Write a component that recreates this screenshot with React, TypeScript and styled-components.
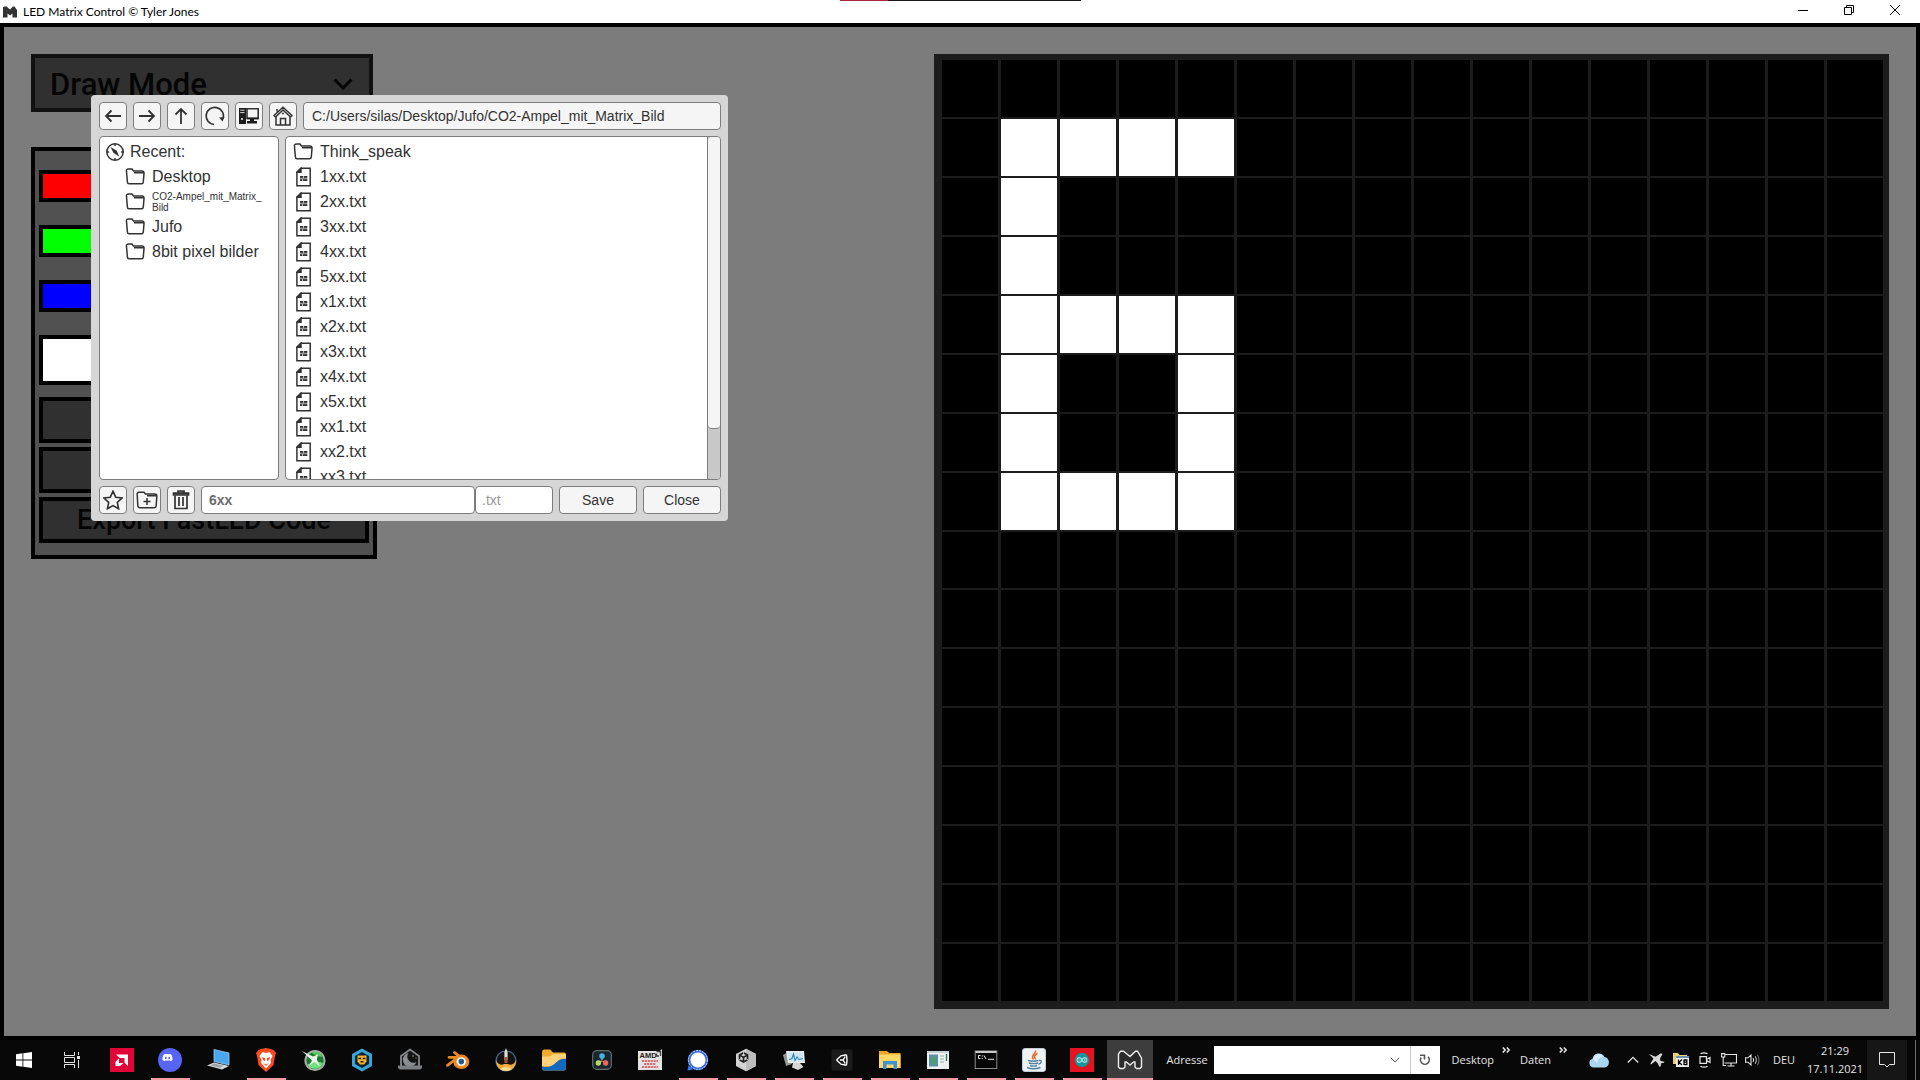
import React, { ReactNode, useState } from "react";
import styled, { createGlobalStyle } from "styled-components";
import { FaDiscord } from "react-icons/fa";
import { SiArduino, SiUnity } from "react-icons/si";

const GlobalStyle = createGlobalStyle`
  *, *::before, *::after { box-sizing: border-box; }
  body { margin: 0; background: #000; font-family: "Open Sans", sans-serif; overflow: hidden; }
  button, input, select { font: inherit; color: inherit; margin: 0; padding: 0; border-radius: 0; }
  svg { display: block; flex: none; }
`;

const Desktop = styled.div`
  position: relative;
  display: flex;
  flex-direction: column;
  height: 100vh;
`;

/* ---------- window chrome ---------- */

const TitleBar = styled.header`
  display: flex;
  align-items: flex-start;
  height: 23px;
  background: #fff;
  color: #000;
  font-size: 12px;
  line-height: 23px;
`;

const AppTitle = styled.h1`
  display: flex;
  align-items: center;
  gap: 6px;
  flex: 1;
  margin: 0;
  padding-left: 2px;
  font-family: Lato, sans-serif;
  font-size: 12px;
  font-weight: 400;
`;

const WindowButtons = styled.div`
  display: flex;
  padding-right: 2px;
`;

const WindowButton = styled.button`
  display: grid;
  place-items: center;
  width: 46px;
  height: 20px;
  border: 0;
  background: none;
`;

const EdgeStrip = styled.div`
  position: absolute;
  top: 0;
  left: 840px;
  display: flex;
  width: 241px;
  height: 1px;
  background: #1c1a1c;
`;

const EdgeStripAccent = styled.div`
  width: 48px;
  background: #a82a3a;
`;

const Stage = styled.main`
  position: relative;
  flex: 1;
  min-height: 0;
  display: flex;
  justify-content: space-between;
  padding: 27px;
  border: 4px solid #000;
  background: #7c7c7c;
`;

/* ---------- tool column ---------- */

const Tools = styled.section`
  display: flex;
  flex-direction: column;
  align-items: flex-start;
  gap: 35px;
  font-family: Roboto, sans-serif;
  font-weight: 500;
  color: #050505;
`;

const ModePicker = styled.div`
  position: relative;
  width: 342px;
  svg { position: absolute; right: 20px; top: 24px; pointer-events: none; }
`;

const ModeSelect = styled.select`
  appearance: none;
  width: 100%;
  height: 58px;
  padding: 3px 0 0 15px;
  border: 4px solid #111;
  background: #303030;
  font-size: 31px;
  line-height: 40px;
  opacity: 1;
`;

const ToolPanel = styled.div`
  display: flex;
  flex-direction: column;
  width: 346px;
  height: 412px;
  padding: 19px 4px 12px;
  border: 4px solid #000;
  background: #515151;
`;

const Channels = styled.div`
  display: flex;
  flex-direction: column;
  gap: 23px;
`;

const Swatch = styled.div<{ $color: string; $tall?: boolean }>`
  height: ${(p) => (p.$tall ? 50 : 32)}px;
  border: 4px solid #000;
  background: ${(p) => p.$color};
`;

const Actions = styled.div`
  display: flex;
  flex-direction: column;
  gap: 4px;
  margin-top: auto;
`;

const ActionButton = styled.button`
  height: 46px;
  border: 4px solid #000;
  background: #303030;
  font-size: 27px;
  line-height: 32px;
`;

/* ---------- LED matrix ---------- */

const Matrix = styled.section`
  display: grid;
  grid-template-columns: repeat(16, 1fr);
  grid-template-rows: repeat(16, 1fr);
  column-gap: 3px;
  row-gap: 2px;
  aspect-ratio: 1;
  padding: 6px 6px 8px 8px;
  background: #1c1c1c;
`;

const Led = styled.button<{ $on: boolean }>`
  min-width: 0;
  min-height: 0;
  border: 0;
  background: ${(p) => (p.$on ? "#fff" : "#000")};
`;

/* ---------- file dialog ---------- */

const Dialog = styled.div`
  position: absolute;
  left: 91px;
  top: 95px;
  display: flex;
  flex-direction: column;
  gap: 6px;
  width: 637px;
  padding: 7px 7px 7px 8px;
  border-radius: 4px;
  background: #d6d6d6;
  color: #323232;
  font-family: "Liberation Sans", Arial, sans-serif;
`;

const Bar = styled.div`
  display: flex;
  gap: 6px;
`;

const boxed = `
  height: 28px;
  border: 1px solid #7d7d7d;
  border-radius: 4px;
  background: #f5f5f5;
  font-size: 14px;
  line-height: 16px;
`;

const SquareButton = styled.button`
  ${boxed}
  display: grid;
  place-items: center;
  width: 28px;
`;

const TextButton = styled.button`
  ${boxed}
  width: 78px;
`;

const PathField = styled.input`
  ${boxed}
  flex: 1;
  min-width: 0;
  padding: 0 8px;
`;

const NameGroup = styled.div`
  display: flex;
  flex: 1;
  min-width: 0;
`;

const NameField = styled.input`
  ${boxed}
  flex: 1;
  min-width: 0;
  padding: 0 7px;
  background: #fff;
  color: #6c6c6c;
  font-weight: 700;
`;

const TypeField = styled.input`
  ${boxed}
  width: 78px;
  padding: 0 6px;
  background: #fff;
  &::placeholder { color: #989898; opacity: 1; }
`;

const Panes = styled.div`
  display: flex;
  gap: 6px;
  height: 344px;
`;

const Pane = styled.div<{ $grow?: boolean }>`
  display: flex;
  ${(p) => (p.$grow ? "flex: 1; min-width: 0;" : "width: 180px;")}
  border: 1px solid #7d7d7d;
  border-radius: 4px;
  background: #fff;
  overflow: hidden;
`;

const List = styled.ul<{ $inset: number }>`
  flex: 1;
  margin: 0;
  padding: 2px 0 0 ${(p) => p.$inset}px;
  list-style: none;
  font-size: 16px;
  line-height: 24px;
`;

const Entry = styled.li<{ $nested?: boolean; $heading?: boolean }>`
  display: flex;
  align-items: center;
  gap: ${(p) => (p.$heading ? 6 : 7)}px;
  height: 25px;
  padding-left: ${(p) => (p.$nested ? 19 : 0)}px;
`;

const IconSlot = styled.span`
  display: grid;
  place-items: center end;
  width: 20px;
`;

const SmallLabel = styled.span`
  width: 114px;
  font-size: 10px;
  line-height: 11px;
  word-break: break-all;
`;

const ScrollTrack = styled.div`
  width: 13px;
  border: 1px solid #7d7d7d;
  border-width: 0 0 0 1px;
  background: #c8c8c8;
`;

const ScrollThumb = styled.div`
  height: 292px;
  border-bottom: 1px solid #7d7d7d;
  border-radius: 4px;
  background: #f5f5f5;
`;

/* ---------- taskbar ---------- */

const Taskbar = styled.footer`
  display: flex;
  align-items: stretch;
  height: 40px;
  background: #080808;
  color: #e4e4e4;
  font-size: 11px;
  line-height: 18px;
`;

const SystemButtons = styled.div`
  display: flex;
  padding-right: 2px;
`;

const AppButtons = styled.nav`
  display: flex;
  flex: 1;
`;

const AppButton = styled.button<{ $running?: boolean; $active?: boolean }>`
  position: relative;
  display: grid;
  place-items: center;
  flex: none;
  width: 48px;
  border: 0;
  background: ${(p) =>
    p.$active ? "linear-gradient(#3d3d3d, #3d3d3d) 1px 0 / 46px 100% no-repeat" : "none"};
  &::after {
    content: "";
    position: absolute;
    bottom: 0;
    left: ${(p) => (p.$active ? 1 : 5)}px;
    right: ${(p) => (p.$active ? 1 : 4)}px;
    height: ${(p) => (p.$running || p.$active ? 2 : 0)}px;
    background: #f79ba4;
  }
`;

const AddressLabel = styled.label`
  display: flex;
  align-items: center;
  gap: 6px;
`;

const AddressBox = styled.div`
  display: flex;
  height: 28px;
  background: #fff;
  color: #555;
`;

const AddressInput = styled.input`
  width: 166px;
  border: 0;
  background: none;
`;

const AddressButton = styled.button<{ $divided?: boolean }>`
  display: grid;
  place-items: center;
  width: 30px;
  border: 0;
  border-left: ${(p) => (p.$divided ? "1px solid #c8c8c8" : "0")};
  background: none;
`;

const Toolbars = styled.div`
  display: flex;
  padding-left: 12px;
`;

const ToolbarLink = styled.button`
  display: flex;
  align-items: center;
  gap: 8px;
  margin-right: 10px;
  border: 0;
  background: none;
  svg { align-self: flex-start; margin-top: 7px; }
`;

const Tray = styled.div`
  display: flex;
  align-items: center;
`;

const TrayButton = styled.button<{ $wide?: boolean }>`
  display: grid;
  place-items: center;
  width: ${(p) => (p.$wide ? 44 : 24)}px;
  height: 100%;
  border: 0;
  background: none;
`;

const Language = styled.button`
  width: 38px;
  border: 0;
  background: none;
`;

const Clock = styled.time`
  width: 64px;
  text-align: center;
`;

const Notifications = styled.button`
  display: grid;
  place-items: center;
  width: 40px;
  height: 100%;
  border: 0;
  background: #161616;
`;

const ShowDesktop = styled.button`
  width: 5px;
  margin-left: 8px;
  border: 0;
  border-left: 1px solid #6a6a6a;
  background: none;
`;

/* ---------- icons ---------- */

type IconProps = { w?: number; h?: number; box?: string; sw?: number; children: ReactNode };

const Line = ({ w = 20, h = 20, box, sw = 1, children }: IconProps) => (
  <svg width={w} height={h} viewBox={box ?? `0 0 ${w} ${h}`} fill="none" stroke="currentColor" strokeWidth={sw} aria-hidden="true">
    {children}
  </svg>
);

const FolderIcon = () => (
  <Line w={20} h={17} sw={1.5}>
    <path d="M1.5 3.5 Q1 1 3.5 1 H7 L8.5 3 H17 Q19.3 3 19 5.5 L18.3 14 Q18.2 15.8 16.5 15.8 H4 Q2.5 15.8 2.4 14 Z M9 4.8 H18.5" />
  </Line>
);

const FileIcon = () => (
  <Line w={17} h={20} sw={1.5}>
    <path d="M5 1.2 H14.2 V18.8 H.9 V5.2 Z" />
    <path d="M.9 5.2 L5 1.2 V5.2 Z" fill="currentColor" />
    <path d="M4 10 H7 M7.7 10 H11.3 M4 13 H6.2 M6.9 13 H11.3" strokeWidth={1.8} />
    <path d="M4 11.5 H11.3" stroke="#999" />
  </Line>
);

const CompassIcon = () => (
  <Line w={18} h={18} sw={1.5} box="1 1 18 18">
    <circle cx="10" cy="10" r="8.2" />
    <path d="M10 2 V4 M10 16 V18 M2 10 H4 M16 10 H18" />
    <path d="M5.5 5 L11.8 8.8 L14 14.5 L8.4 10.8 Z" fill="currentColor" stroke="none" />
  </Line>
);

const TitleLogo = () => (
  <svg width="15" height="12" viewBox="0 0 15 12" fill="#333" aria-hidden="true">
    <path d="M1 1.5 L2 .5 H4.5 L8 3.5 L11 .5 H12.5 L15 4 V11.5 H10.5 V7.5 L8 9.5 L5.5 7.5 V11.5 H.5 L1 10 Z" />
  </svg>
);

const MLogo = () => (
  <svg width="26" height="20" viewBox="0 0 26 20" fill="#2b2b2b" stroke="#f0f0f0" strokeWidth={1.4} strokeLinejoin="round" aria-hidden="true">
    <path d="M1.5 4 L3.5 1.2 H6.5 L13 6.5 L18.5 1.2 H20.5 L24.5 8 V17 L23 18.5 H19.5 L18 17 V12 H16.5 L13 15 L9.5 12 H8 V17 L6.5 18.5 H3 L1.5 17 Z" />
  </svg>
);

const AppIcon = ({ children, size = 24 }: { children: ReactNode; size?: number }) => (
  <svg width={size} height={size} viewBox="0 0 24 24" aria-hidden="true">{children}</svg>
);

const apps: { name: string; running?: boolean; active?: boolean; icon: ReactNode }[] = [
  {
    name: "AMD Radeon Software",
    icon: (
      <AppIcon>
        <rect width="24" height="24" fill="#e0063a" />
        <path d="M6 6.5 H18 V18 L14.5 14.5 V10 H9.8 Z M9 10.5 V15 H13.5 L10 18 H5.5 V13.8 Z" fill="#fff" />
      </AppIcon>
    ),
  },
  {
    name: "Discord",
    running: true,
    icon: (
      <AppIcon>
        <circle cx="12" cy="12" r="12" fill="#5865f2" />
        <FaDiscord x="4" y="4" width="16" height="16" color="#fff" />
      </AppIcon>
    ),
  },
  {
    name: "Remote PC",
    icon: (
      <AppIcon>
        <path d="M8 1.5 L23 5 V17 L8 13.5 Z" fill="#4aa8ee" stroke="#9cc7e8" strokeWidth=".8" />
        <path d="M1 17.5 L8 14.5 L23 18 L16 21.5 Z" fill="#d6dade" />
        <path d="M4 17.4 L8.5 15.6 L18 18 L14 19.8 Z" fill="#9da5ab" />
      </AppIcon>
    ),
  },
  {
    name: "Brave",
    running: true,
    icon: (
      <AppIcon>
        <path d="M12 0 L17 1 L19.5 2 L22 5 L21 8 L19.5 17 L12 24 L4.5 17 L3 8 L2 5 L4.5 2 L7 1 Z" fill="#fb4a1f" />
        <path d="M12 5 L15.5 4 L18.5 8 L16.5 12 L17 15 L12 20.5 L7 15 L7.5 12 L5.5 8 L8.5 4 Z" fill="#fff" />
        <path d="M8 9 L11 10.3 V13 L9 12 Z M16 9 L13 10.3 V13 L15 12 Z M9 15 L12 16.5 L15 15 L12 18 Z" fill="#fb4a1f" />
      </AppIcon>
    ),
  },
  {
    name: "MSI Afterburner",
    icon: (
      <AppIcon>
        <circle cx="13" cy="12.5" r="9.6" fill="#187a2c" stroke="#a7ada8" strokeWidth="2" />
        <path d="M9 4.5 A8.5 8.5 0 0 1 20.5 9 L15 8 Z" fill="#57c964" />
        <path d="M5.5 16.5 A8.5 8.5 0 0 0 21 15 L14 13 Z" fill="#6fe07c" />
        <path d="M0 3 L11 8.5 L16 6.5 L14.8 11.5 L18 18.5 L12.5 14 L7 17.5 L10 12.5 Z" fill="#eef2ef" />
      </AppIcon>
    ),
  },
  {
    name: "Game Launcher",
    icon: (
      <AppIcon>
        <path d="M12 .5 L22 6 V18 L12 23.5 L2 18 V6 Z" fill="#37a5d6" />
        <path d="M12 4 L19 8 V16 L12 20 L5 16 V8 Z" fill="#07212e" />
        <path d="M7.5 7.5 H16.5 V13.5 L14 16.5 H10 L7.5 13.5 Z" fill="#f5b133" />
        <path d="M8.5 10.5 H11.2 M12.8 10.5 H15.5 M10.5 13.8 H13.5" stroke="#2b1c06" strokeWidth="1.4" />
      </AppIcon>
    ),
  },
  {
    name: "Moonlight",
    icon: (
      <AppIcon>
        <path d="M3 18 V8 L12 1.5 L21 8 V18" fill="#141414" stroke="#85888c" strokeWidth="1.8" />
        <path d="M10.5 5 A7 7 0 1 0 18.5 14 A6.2 6.2 0 0 1 10.5 5 Z" fill="#8a8d91" />
        <path d="M0 17.5 H24 V20 L22 21.5 H2 L0 20 Z" fill="#7b7e82" />
        <circle cx="15" cy="8" r=".8" fill="#b0b0b0" />
        <circle cx="18" cy="10" r=".6" fill="#b0b0b0" />
      </AppIcon>
    ),
  },
  {
    name: "Blender",
    icon: (
      <AppIcon>
        <path d="M3 9.3 H11 M1.5 17.3 L13 8.5 L8.5 4.5" fill="none" stroke="#ea8a22" strokeWidth="2.8" strokeLinecap="round" strokeLinejoin="round" />
        <path d="M9 3.8 L18 9.5 L12 12 Z" fill="#ea8a22" />
        <ellipse cx="15.3" cy="13.8" rx="8" ry="7.2" fill="#ea8a22" />
        <ellipse cx="15.3" cy="13.6" rx="4.7" ry="4.3" fill="#fff" />
        <circle cx="15.3" cy="13.6" r="2.8" fill="#22598f" />
      </AppIcon>
    ),
  },
  {
    name: "Rocket Tool",
    icon: (
      <AppIcon>
        <circle cx="12" cy="13" r="10" fill="#16130f" stroke="#4a6b94" strokeWidth="1.2" />
        <path d="M2 12 C4 17 8 17.5 10 16 H14 C16 17.5 20 17 22 12 C22 19 17.5 23 12 23 C6.5 23 2 19 2 12 Z" fill="#f3ad42" />
        <path d="M6 21 C9 18.5 15 18.5 18 21 C15 23.5 9 23.5 6 21 Z" fill="#ffd98a" />
        <path d="M12 0 L13.6 4 V12 H10.4 V4 Z" fill="#dedede" />
        <path d="M10.4 9 H13.6 V15 H10.4 Z" fill="#a4513e" />
      </AppIcon>
    ),
  },
  {
    name: "Files",
    icon: (
      <AppIcon>
        <path d="M0 4 Q0 1.5 2 1.5 H8 L11 4.5 H22 Q24 4.5 24 6.5 V20 Q24 22.5 22 22.5 H2 Q0 22.5 0 20 Z" fill="#f2ab2c" />
        <path d="M0 8.5 H8 L11 6 H24 V18 H0 Z" fill="#ffd27a" />
        <path d="M0 18.5 C6 20 11 18 14 14.5 C17 11.5 20 10 24 11 V20 Q24 22.5 22 22.5 H2 Q0 22.5 0 20 Z" fill="#1269bd" />
      </AppIcon>
    ),
  },
  {
    name: "DaVinci Resolve",
    icon: (
      <AppIcon size={20}>
        <rect x=".8" y=".8" width="22.4" height="22.4" rx="5" fill="#1b2530" stroke="#5c7468" strokeWidth="1.4" />
        <path d="M12 13 L8.8 7 H15.2 Z" fill="#43b5df" />
        <circle cx="12" cy="7.2" r="3.3" fill="#43b5df" />
        <path d="M12 13 L9 18 L6 13 Z" fill="#b7d665" />
        <circle cx="7.6" cy="15.6" r="3.2" fill="#b7d665" />
        <path d="M12 13 L15 18 L18 13 Z" fill="#f0645a" />
        <circle cx="16.4" cy="15.6" r="3.2" fill="#f0645a" />
      </AppIcon>
    ),
  },
  {
    name: "Ryzen Master",
    icon: (
      <AppIcon>
        <path d="M0 3 H22 L24 1 V22 H0 Z" fill="#e4e2e2" />
        <text x="1.5" y="9.5" fontFamily="Liberation Sans" fontWeight="700" fontSize="7.5" fill="#222">AMD</text>
        <path d="M18.5 3.5 H22.5 V8 M18.5 5.5 V8 H21" fill="none" stroke="#444" strokeWidth="1.3" />
        <path d="M4 13 H20 M6 16 H18 M4 19 H20" stroke="#d34853" strokeWidth="1.6" strokeDasharray="2.2 .7" />
      </AppIcon>
    ),
  },
  {
    name: "Signal",
    running: true,
    icon: (
      <AppIcon>
        <path d="M2.5 17 L1.5 22.5 L7 21.5" fill="#3a76f0" />
        <circle cx="12" cy="12" r="10.3" fill="#3a68d8" />
        <circle cx="12" cy="12" r="9.4" fill="none" stroke="#c7d8fb" strokeWidth="1" strokeDasharray="2 1" />
        <circle cx="12" cy="12" r="7.6" fill="#fff" />
      </AppIcon>
    ),
  },
  {
    name: "Unity Hub",
    running: true,
    icon: (
      <AppIcon>
        <path d="M12 .8 L22 6 V18 L12 23.2 L2 18 V6 Z" fill="#d4d4d4" />
        <path d="M12 .8 L22 6 V18 L12 23.2 Z" fill="#bcbcbc" />
        <SiUnity x="4" y="4" width="16" height="16" color="#222" />
      </AppIcon>
    ),
  },
  {
    name: "Resource Monitor",
    running: true,
    icon: (
      <AppIcon>
        <path d="M1 7 L6 4 L10 16 L4 18 Z" fill="#94988f" />
        <path d="M4 3 H22 L23 15 H6 Z" fill="#ececec" />
        <path d="M6 4.5 H20.5 L21.5 13.5 H7.5 Z" fill="#cbe6f2" />
        <path d="M7 11.5 L10 10.5 L11.5 6 L13 12.5 L15 9 L17 11.5 L21 10.5" fill="none" stroke="#2e84b8" strokeWidth="1.1" />
        <path d="M11 15 H18 L21.5 19 L16 22 L10 19.5 Z" fill="#d6d6d6" />
      </AppIcon>
    ),
  },
  {
    name: "Unity",
    running: true,
    icon: (
      <AppIcon>
        <rect x="1.5" y="1.5" width="21" height="21" fill="#1b1b1b" />
        <path d="M6.5 12 L11 7.8 L16.5 6.8 M6.5 12 L11 16.2 L16.5 17.2 M16.5 6.8 L17 12 L16.5 17.2 M10 12 H13 L15.2 8.5 M13 12 L15.2 15.5" fill="none" stroke="#fff" strokeWidth="1.4" />
      </AppIcon>
    ),
  },
  {
    name: "Explorer",
    running: true,
    icon: (
      <AppIcon>
        <path d="M1 3 H9 L11 5 H22.5 V20 H1 Z" fill="#e9a823" />
        <path d="M1 6.5 H22.5 V20 H1 Z" fill="#ffd767" />
        <path d="M5 21 V13 H19 V21 H15.5 V16.5 H8.5 V21 Z" fill="#3f93cf" />
      </AppIcon>
    ),
  },
  {
    name: "Settings Viewer",
    running: true,
    icon: (
      <AppIcon>
        <rect x="1" y="3" width="22" height="18" fill="#eef1f1" />
        <rect x="3" y="6.5" width="9" height="12" fill="#5f8fa3" />
        <rect x="4.5" y="9" width="6" height="7" fill="#4f9c7c" />
        <path d="M14 8 H18 M14 11 H18 M14 14 H18" stroke="#9aa" />
        <path d="M20.5 6 V13" stroke="#34785f" strokeWidth="1.4" />
        <path d="M1 4 H23" stroke="#b9c7cb" strokeWidth="1.5" />
      </AppIcon>
    ),
  },
  {
    name: "Command Prompt",
    running: true,
    icon: (
      <AppIcon>
        <rect x="1.2" y="3" width="21.6" height="17.5" fill="#070707" stroke="#8f8f8f" />
        <path d="M1.5 4 H22.5" stroke="#c9c9c9" strokeWidth="2" />
        <path d="M6.5 7.5 H4.5 V10.5 H6.5 M8.3 7.5 V8.5 M8.3 10 V11 M10 7.5 L12 11 M14 11.3 H20" fill="none" stroke="#e8e8e8" />
      </AppIcon>
    ),
  },
  {
    name: "Java",
    running: true,
    icon: (
      <AppIcon>
        <rect x=".5" y=".5" width="23" height="23" rx="2.5" fill="#eef2f5" stroke="#c3ccd3" />
        <path d="M13.5 2.5 C14.5 5.5 8 7 11.5 11.5 M15.5 5.5 C12 7 12 8.5 13.5 11.5" fill="none" stroke="#e76f2c" strokeWidth="1.6" />
        <path d="M6 12.5 Q11.5 14 16.5 12.5 M7 15 Q11.5 16.3 16 15 M8 17.5 Q11.5 18.7 15 17.5 M17 12.5 Q20.5 12 18.5 15 L16.5 16.3 M5 19.5 Q11.5 22 18.5 19.5" fill="none" stroke="#5382a1" strokeWidth="1.4" />
      </AppIcon>
    ),
  },
  {
    name: "Arduino",
    running: true,
    icon: (
      <AppIcon>
        <rect width="24" height="24" fill="#e5121f" />
        <circle cx="12" cy="12" r="7.2" fill="#11979d" />
        <SiArduino x="6.5" y="6.5" width="11" height="11" color="#dff4f4" />
      </AppIcon>
    ),
  },
  { name: "LED Matrix Control", active: true, icon: <MLogo /> },
];

/* ---------- data ---------- */

const litRows: Record<number, number[]> = {
  1: [1, 2, 3, 4],
  2: [1],
  3: [1],
  4: [1, 2, 3, 4],
  5: [1, 4],
  6: [1, 4],
  7: [1, 2, 3, 4],
};

const files = ["1xx", "2xx", "3xx", "4xx", "5xx", "x1x", "x2x", "x3x", "x4x", "x5x", "xx1", "xx2", "xx3"];

const navButtons: { name: string; icon: ReactNode }[] = [
  { name: "Back", icon: <Line sw={1.8}><path d="M18 10 H3 M8.5 4.5 L3 10 L8.5 15.5" /></Line> },
  { name: "Forward", icon: <Line sw={1.8}><path d="M2 10 H17 M11.5 4.5 L17 10 L11.5 15.5" /></Line> },
  { name: "Up", icon: <Line sw={1.8}><path d="M10 18 V3 M4.5 8.5 L10 3 L15.5 8.5" /></Line> },
  {
    name: "Refresh",
    icon: (
      <Line sw={1.7}>
        <path d="M9 18.5 A8.6 8.6 0 1 1 18 12.5" />
        <path d="M14 11.5 L19.5 11 L17.5 15.5 Z" fill="currentColor" stroke="none" />
      </Line>
    ),
  },
  {
    name: "Computer",
    icon: (
      <Line>
        <path d="M0 2 H7 V18 H0 Z" fill="#1c1c1c" stroke="none" />
        <path d="M1.2 4.2 H5.5 M1.2 6.6 H5.5" stroke="#ddd" />
        <circle cx="3" cy="13" r="1.1" fill="#ddd" stroke="none" />
        <path d="M6.5 2.8 H19.2 V12.5 H8 V3" strokeWidth="1.6" />
        <path d="M8 11.5 H19.5 V13.2 H8 Z M11 13 H15 V15 H18 V17.5 H8 V15 H11 Z" fill="#1c1c1c" stroke="none" />
      </Line>
    ),
  },
  {
    name: "Home",
    icon: (
      <Line sw={1.5}>
        <path d="M1 9.5 L10 1.2 L19 9.5 L17.5 11 L10 4 L2.5 11 Z M3 11 V19 H17 V11 M7.5 19 V12.5 H12.5 V19 M4 5.5 V3" />
        <circle cx="10" cy="7.5" r="1" fill="currentColor" stroke="none" />
      </Line>
    ),
  },
];

const editButtons: { name: string; icon: ReactNode }[] = [
  {
    name: "Favourite",
    icon: (
      <Line sw={1.6}>
        <path d="M10 1.2 L12.7 7.2 L19 8 L14.3 12.3 L15.6 18.8 L10 15.6 L4.4 18.8 L5.7 12.3 L1 8 L7.3 7.2 Z" />
      </Line>
    ),
  },
  {
    name: "New folder",
    icon: (
      <Line w={22} h={18} sw={1.5}>
        <path d="M1.2 3.5 Q1 1.2 3 1.2 H8 L9.5 3 H18.5 Q21 3 20.8 5.5 L20.2 14.5 Q20 16.8 18 16.8 H4 Q2 16.8 1.8 14.5 Z M11 4.8 H20 M11 7 V14 M7.5 10.5 H14.5" />
      </Line>
    ),
  },
  {
    name: "Delete",
    icon: (
      <Line sw={1.7}>
        <path d="M2.5 3.2 H17.5 V5 H2.5 Z M7 2.5 V1 H13 V2.5" fill="#888" />
        <path d="M4 5.5 V18.5 H16 V5.5 M8 7 V16 M12 7 V16" />
      </Line>
    ),
  },
];

const recents = ["Desktop", "CO2-Ampel_mit_Matrix_Bild", "Jufo", "8bit pixel bilder"];

const MoreIcon = () => (
  <Line w={8} h={6} sw={1.6}><path d="M.8 .5 L3.2 3 L.8 5.5 M4.8 .5 L7.2 3 L4.8 5.5" /></Line>
);

/* ---------- sections ---------- */

const LedMatrix = () => {
  const [cells, setCells] = useState(() =>
    Array.from({ length: 256 }, (_, i) => litRows[Math.floor(i / 16)]?.includes(i % 16) ?? false)
  );
  return (
    <Matrix>
      {cells.map((on, i) => (
        <Led
          key={i}
          $on={on}
          aria-label={`LED ${i}`}
          aria-pressed={on}
          onClick={() => setCells(cells.map((c, n) => (n === i ? !c : c)))}
        />
      ))}
    </Matrix>
  );
};

const FileDialog = () => (
  <Dialog role="dialog" aria-label="Save file">
    <Bar>
      {navButtons.map((b) => (
        <SquareButton key={b.name} aria-label={b.name}>{b.icon}</SquareButton>
      ))}
      <PathField aria-label="Path" defaultValue="C:/Users/silas/Desktop/Jufo/CO2-Ampel_mit_Matrix_Bild" />
    </Bar>
    <Panes>
      <Pane>
        <List $inset={6}>
          <Entry $heading>
            <CompassIcon />
            Recent:
          </Entry>
          {recents.map((name) => (
            <Entry key={name} $nested>
              <FolderIcon />
              {name.length > 20 ? <SmallLabel>{name}</SmallLabel> : name}
            </Entry>
          ))}
        </List>
      </Pane>
      <Pane $grow>
        <List $inset={7}>
          <Entry>
            <FolderIcon />
            Think_speak
          </Entry>
          {files.map((name) => (
            <Entry key={name}>
              <IconSlot><FileIcon /></IconSlot>
              {name}.txt
            </Entry>
          ))}
        </List>
        <ScrollTrack>
          <ScrollThumb />
        </ScrollTrack>
      </Pane>
    </Panes>
    <Bar>
      {editButtons.map((b) => (
        <SquareButton key={b.name} aria-label={b.name}>{b.icon}</SquareButton>
      ))}
      <NameGroup>
        <NameField aria-label="File name" defaultValue="6xx" />
        <TypeField aria-label="File type" placeholder=".txt" />
      </NameGroup>
      <TextButton>Save</TextButton>
      <TextButton>Close</TextButton>
    </Bar>
  </Dialog>
);

export default function App() {
  return (
    <Desktop>
      <GlobalStyle />
      <TitleBar>
        <AppTitle>
          <TitleLogo />
          LED Matrix Control © Tyler Jones
        </AppTitle>
        <WindowButtons>
          <WindowButton aria-label="Minimize">
            <Line w={10} h={10}><path d="M0 5.5 H10" /></Line>
          </WindowButton>
          <WindowButton aria-label="Restore">
            <Line w={10} h={10}><path d="M.5 2.5 H7.5 V9.5 H.5 Z M2.5 2.5 V.5 H9.5 V7.5 H7.5" /></Line>
          </WindowButton>
          <WindowButton aria-label="Close window">
            <Line w={10} h={10}><path d="M0 0 L10 10 M10 0 L0 10" /></Line>
          </WindowButton>
        </WindowButtons>
      </TitleBar>
      <EdgeStrip><EdgeStripAccent /></EdgeStrip>

      <Stage>
        <Tools>
          <ModePicker>
            <ModeSelect aria-label="Mode">
              <option>Draw Mode</option>
            </ModeSelect>
            <Line w={20} h={12} sw={3}><path d="M1.5 1.5 L10 10 L18.5 1.5" /></Line>
          </ModePicker>
          <ToolPanel>
            <Channels>
              <Swatch $color="#f00" />
              <Swatch $color="#0f0" />
              <Swatch $color="#00f" />
              <Swatch $color="#fff" $tall />
            </Channels>
            <Actions>
              <ActionButton aria-label="Import" />
              <ActionButton aria-label="Export" />
              <ActionButton>Export FastLED Code</ActionButton>
            </Actions>
          </ToolPanel>
        </Tools>
        <LedMatrix />
      </Stage>

      <FileDialog />

      <Taskbar>
        <SystemButtons>
          <AppButton aria-label="Start">
            <svg width="16" height="16" viewBox="0 0 16 16" fill="#fff" aria-hidden="true">
              <path d="M0 2.2 L6.5 1.3 V7.6 H0 Z M7.3 1.2 L16 0 V7.6 H7.3 Z M0 8.4 H6.5 V14.7 L0 13.8 Z M7.3 8.4 H16 V16 L7.3 14.8 Z" />
            </svg>
          </AppButton>
          <AppButton aria-label="Task view">
            <Line w={16} h={16}>
              <path d="M.5 0 V3.5 H10.5 V0 M.5 16 V12.5 H10.5 V16 M.5 5.5 H10.5 V10.5 H.5 Z M14.5 0 V3 M14.5 8 V16" />
              <path d="M13 4 H16 V7 H13 Z" fill="currentColor" stroke="none" />
            </Line>
          </AppButton>
        </SystemButtons>
        <AppButtons>
          {apps.map((a) => (
            <AppButton key={a.name} aria-label={a.name} $running={a.running} $active={a.active}>
              {a.icon}
            </AppButton>
          ))}
        </AppButtons>
        <Tray>
          <AddressLabel>
            Adresse
            <AddressBox>
              <AddressInput />
              <AddressButton aria-label="Show history">
                <Line w={10} h={6}><path d="M.8 .8 L5 5 L9.2 .8" /></Line>
              </AddressButton>
              <AddressButton aria-label="Reload" $divided>
                <Line w={12} h={12} sw={1.6}>
                  <path d="M2.2 3.5 A4.4 4.4 0 1 0 9 2.8" />
                  <path d="M1 1.3 H5.5 V5.6" />
                </Line>
              </AddressButton>
            </AddressBox>
          </AddressLabel>
        </Tray>
        <Toolbars>
          <ToolbarLink>Desktop<MoreIcon /></ToolbarLink>
          <ToolbarLink>Daten<MoreIcon /></ToolbarLink>
        </Toolbars>
        <Tray>
          <TrayButton $wide aria-label="Weather">
            <svg width="22" height="16" viewBox="0 0 22 16" aria-hidden="true">
              <path d="M5 15.5 A4.5 4.5 0 0 1 4.5 6.8 A6.4 6.4 0 0 1 16.5 5 A5.4 5.4 0 0 1 17 15.5 Z" fill="#a9d5f3" />
              <path d="M5 7 A6 6 0 0 1 16 5 C12 4 10 8 9 11 Z" fill="#d8eefc" />
            </svg>
          </TrayButton>
          <TrayButton aria-label="Hidden icons">
            <Line w={12} h={8} sw={1.3}><path d="M.8 6.5 L6 1.3 L11.2 6.5" /></Line>
          </TrayButton>
          <TrayButton aria-label="Flight">
            <svg width="16" height="16" viewBox="0 0 16 16" fill="#d8d8d8" aria-hidden="true">
              <path d="M0 2 L6.5 4.8 L12 1.2 L13.5 2 L11 6.5 L11.5 9 L15.5 9.8 L14.5 11 L12 11.3 L11.8 14 L10.5 15 L8.5 11 L6.5 9 L2 12.5 L1.5 11.5 L4.5 6.5 Z" />
            </svg>
          </TrayButton>
          <TrayButton aria-label="Keyboard">
            <svg width="16" height="16" viewBox="0 0 16 16" aria-hidden="true">
              <path d="M0 1 H5 L6.5 3 H14 V12 H0 Z" fill="#f0cf74" />
              <path d="M3 5 H16 V15 H3 Z" fill="#f4f4f4" />
              <path d="M3 5 H16" stroke="#6d8fb5" strokeWidth="2" />
              <path d="M5.5 7.5 V13 M9 7.5 L6 10.3 L9 13 M11 7.5 V13 M11 8 H13.8 V10.2 H11 M13.8 10.2 V12.6 H11" fill="none" stroke="#000" strokeWidth="1.3" />
            </svg>
          </TrayButton>
          <TrayButton aria-label="Camera">
            <Line w={14} h={16} sw={1.2}>
              <path d="M2 4.6 H8.5 V11.4 H2 Z M8.5 7.5 L12 5.5 V10.5 L8.5 8.5 M2.5 1.8 Q6 -.2 9.5 1.8 M2.5 14.2 Q6 16.2 9.5 14.2" />
            </Line>
          </TrayButton>
          <TrayButton aria-label="Network">
            <Line w={16} h={14} sw={1.1}>
              <path d="M4.5 1.5 H15.5 V10 H3.5 M10 10 V13 M6.5 13 H13.5 M.6 .6 H3.8 V4 H.6 Z M2.2 4 V12.5 H5" />
            </Line>
          </TrayButton>
          <TrayButton aria-label="Volume">
            <Line w={16} h={14} sw={1.1}>
              <path d="M.6 4.8 H3 L6 2 V12 L3 9.2 H.6 Z M8 5 Q9.3 7 8 9" />
              <path d="M10.2 3.3 Q12.4 7 10.2 10.7" stroke="#bbb" />
              <path d="M12.5 1.8 Q15.6 7 12.5 12.2" stroke="#666" />
            </Line>
          </TrayButton>
          <Language>DEU</Language>
          <Clock>21:29<br />17.11.2021</Clock>
          <Notifications aria-label="Notifications">
            <Line w={16} h={16}><path d="M.5 .5 H15.5 V12.5 H10.5 L8 15 L5.5 12.5 H.5 Z" /></Line>
          </Notifications>
        </Tray>
        <ShowDesktop aria-label="Show desktop" />
      </Taskbar>
    </Desktop>
  );
}
